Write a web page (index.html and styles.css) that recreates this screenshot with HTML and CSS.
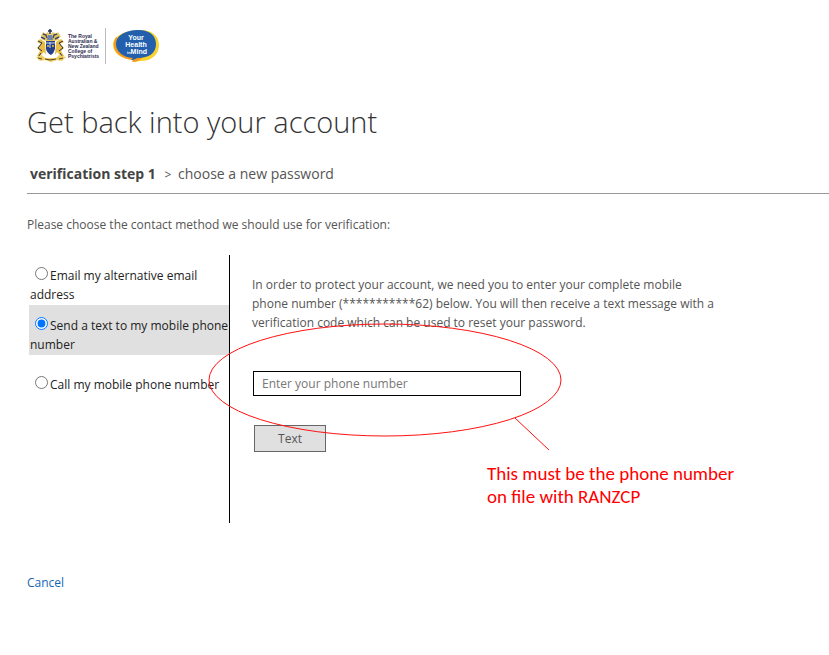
FILE: index.html
```html
<!DOCTYPE html>
<html lang="en">

<head>
  <meta charset="utf-8">
  <title>Get back into your account</title>
  <meta name="viewport" content="width=device-width, initial-scale=1">
  <link rel="stylesheet" href="styles.css">
</head>

<body>
  <div class="page">
    <header class="brand">
      <svg class="crest" viewBox="0 0 64 36" role="img" aria-label="The Royal Australian &amp; New Zealand College of Psychiatrists">
        <!-- mantling and helmet -->
        <path d="M6 8l2-4 2 2 3-2 2 3 3-3 3 2 2-2 3 5-3 1 1 2-5 1h-8l-5-2 2-2z" fill="#e9c558" />
        <path d="M8 6l3 1 1 3M22 6l-3 1-1 3M6 9l4 2M24 9l-4 2" stroke="#3c4a70" stroke-width="1.5" fill="none" />
        <path d="M15 1v5M13 3h4" stroke="#24304f" stroke-width="1.5" />
        <path d="M13 7h4l1 5h-6z" fill="#7185aa" />
        <!-- supporters -->
        <path d="M10 14l-5-3-3 3 4 2-4 4 3 3-3 5h3l4-4 2 3zM21 14l5-3 3 3-4 2 4 4-3 3 3 5h-3l-4-4-2 3z" fill="#e7bd48" />
        <path d="M3 13l4 2-4 5 4 3M28 13l-4 2 4 5-4 3M6 25l-2 3M25 25l2 3" stroke="#293349" stroke-width="1" fill="none" />
        <!-- shield -->
        <path d="M11 13h9v8q-1 4-4 6q-4-2-5-6z" fill="#24408a" />
        <path d="M11 15h9M15 14v6" stroke="#c9d5ee" stroke-width="1" />
        <circle cx="13" cy="18" r="1" fill="#f1c232" />
        <circle cx="18" cy="18" r="1" fill="#f1c232" />
        <!-- motto scroll -->
        <path d="M1 29l6-2 3 3h11l3-3 7 2-4 4-5-1-6 2-6-2-5 1z" fill="#efcf61" />
        <path d="M3 30l4 1M10 31l5 1 6-1M24 31l4-1" stroke="#504629" stroke-width="1" fill="none" />
        <g class="crest-name">
          <text x="33" y="10">The Royal</text>
          <text x="33" y="15">Australian &amp;</text>
          <text x="33" y="20">New Zealand</text>
          <text x="33" y="25">College of</text>
          <text x="33" y="30">Psychiatrists</text>
        </g>
      </svg>
      <svg class="bubble" viewBox="0 0 48 36" role="img" aria-label="Your Health in Mind">
        <path d="M25 2C39 1 46 8 46 17c0 10-8 16-18 16-3 0-5 1-8 1l1-2C8 31 0 25 0 17 0 8 11 3 25 2z" fill="#f8d22f" />
        <path d="M3 9C-3 20 4 30 20 32l-1 2c5 0 8-2 10-4z" fill="#f39a21" />
        <path d="M23 2C37 1 43 8 43 16c0 9-7 14-18 14-2 0-3 2-7 2l2-2C9 29 3 23 3 16 3 8 11 3 23 2z" fill="#2260ae" />
        <g class="bubble-text">
          <text x="23" y="12">Your</text>
          <text x="23" y="19">Health</text>
          <text x="24" y="26"><tspan class="small">in</tspan>Mind</text>
        </g>
      </svg>
    </header>

    <h1>Get back into your account</h1>

    <p class="steps"><strong>verification step 1</strong> <span class="arrow">&gt;</span> <span>choose a new password</span></p>

    <p class="intro">Please choose the contact method we should use for verification:</p>

    <form class="verify" action="#" method="post">
      <div class="methods">
        <div class="method">
          <input type="radio" name="method" id="email"><label for="email">Email my alternative email<br>address</label>
        </div>
        <div class="method selected">
          <input type="radio" name="method" id="sms" checked><label for="sms">Send a text to my mobile phone<br>number</label>
        </div>
        <div class="method">
          <input type="radio" name="method" id="call"><label for="call">Call my mobile phone number</label>
        </div>
      </div>

      <div class="details">
        <label class="help" for="phone">In order to protect your account, we need you to enter your complete mobile<br>phone number (***********62) below. You will then receive a text message with a<br>verification code which can be used to reset your password.</label>
        <input type="text" id="phone" name="phone" placeholder="Enter your phone number">
        <button type="submit">Text</button>
      </div>

      <!-- note drawn over the form -->
      <div class="callout">
        <svg viewBox="0 0 354 128" aria-hidden="true">
          <ellipse cx="177" cy="57" rx="176" ry="56" />
          <path d="M307 95l34 32" />
        </svg>
        <p>This must be the phone number<br>on file with RANZCP</p>
      </div>
    </form>

    <a class="cancel" href="#">Cancel</a>
  </div>
</body>

</html>
```

FILE: styles.css
```css
* {
  box-sizing: border-box;
}

body {
  margin: 0;
  background-color: #fff;
  color: #555;
  font-family: "Segoe UI", "Open Sans", sans-serif;
  font-size: 12px;
  line-height: 19px;
}

.page {
  padding: 28px 0 28px 27px;
}

.brand {
  display: flex;
  align-items: center;
  height: 36px;
  padding-left: 8px;
}

.crest {
  width: 64px;
  height: 36px;
}

.crest-name {
  font-family: "Liberation Sans", sans-serif;
  font-size: 5px;
  font-weight: 700;
  fill: #2b2b50;
}

.bubble {
  width: 56px;
  height: 36px;
  margin-left: 6px;
  padding-left: 7px;
  border-left: 1px solid #bbb;
}

.bubble-text {
  font-family: "Liberation Sans", sans-serif;
  font-size: 7px;
  font-weight: 700;
  text-anchor: middle;
  fill: #fff;
}

.bubble-text .small {
  font-size: 4px;
}

h1 {
  margin: 36px 0 0;
  color: #333;
  font-size: 29px;
  font-weight: 300;
  line-height: 44px;
}

.steps {
  margin: 20px 0 0;
  padding: 0 3px 8px;
  border-bottom: 1px solid #999;
  font-size: 14px;
  line-height: 20px;
}

.steps strong {
  color: #444;
}

.arrow {
  margin: 0 3px 0 5px;
  font-size: 12px;
}

.intro {
  margin: 21px 0;
}

.verify {
  display: flex;
  position: relative;
  min-height: 268px;
}

.methods {
  width: 203px;
  padding-left: 2px;
  border-right: 1px solid #000;
  color: #222;
  white-space: nowrap;
}

.method {
  padding: 11px 0 1px 1px;
}

.method input {
  width: 13px;
  height: 13px;
  margin: 0 2px 0 5px;
}

.selected {
  margin-bottom: 9px;
  background-color: #e0e0e0;
}

.details {
  display: flex;
  flex: 1;
  flex-direction: column;
  align-items: flex-start;
  padding: 20px 0 0 22px;
}

.details input {
  width: 268px;
  height: 25px;
  margin: 39px 0 0 1px;
  padding: 0 8px;
  border: 1px solid #000;
  font: inherit;
}

.details input::placeholder {
  color: #777;
}

button {
  width: 72px;
  height: 27px;
  margin: 29px 0 0 2px;
  border: 1px solid #666;
  background-color: #e0e0e0;
  color: #555;
  font: inherit;
}

.callout {
  position: absolute;
  top: 68px;
  left: 181px;
  pointer-events: none;
}

.callout svg {
  display: block;
  width: 354px;
  height: 128px;
  fill: none;
  stroke: #f11;
}

.callout p {
  margin: 11px 0 0 279px;
  color: #f00;
  font-family: Calibri, Carlito, Lato, sans-serif;
  font-size: 19px;
  line-height: 23px;
  white-space: nowrap;
}

.cancel {
  display: inline-block;
  margin-top: 50px;
  color: #1565b5;
  text-decoration: none;
}
```
